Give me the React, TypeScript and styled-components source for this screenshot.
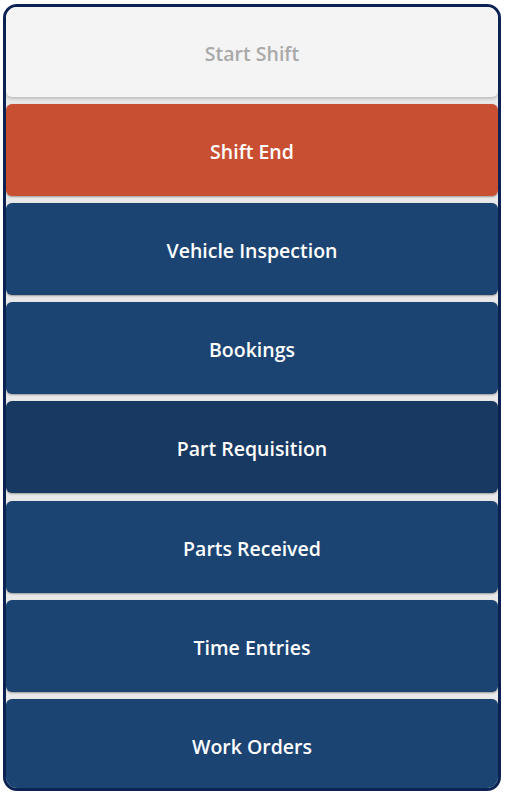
import React from "react";
import styled, { createGlobalStyle } from "styled-components";

const Global = createGlobalStyle`
  html, body { margin: 0; padding: 0; background: #ffffff; }
  body { font-family: "Open Sans", "Noto Sans", sans-serif; }
`;

const Page = styled.div`
  padding: 4px 4px 2px 3px;
`;

const Frame = styled.div`
  border: 3.5px solid #0b2253;
  border-radius: 14px;
  overflow: hidden;
  background: #e9e9e9;
  height: 787px;
  box-sizing: border-box;
  display: flex;
  flex-direction: column;
`;

const StartPanel = styled.div`
  height: 90px;
  flex: none;
  background: #f4f4f4;
  display: flex;
  align-items: center;
  justify-content: center;
  color: #a9a9a9;
  font-size: 19.5px;
  font-weight: 600;
  padding-top: 2px;
  box-sizing: border-box;
  box-shadow: 0 2px 3px rgba(0, 0, 0, 0.18);
  border-radius: 0 0 6px 6px;
`;

const List = styled.div`
  display: flex;
  flex-direction: column;
  gap: 7.3px;
  padding-top: 6.5px;
`;

const Tile = styled.div<{ $bg: string }>`
  height: 92px;
  flex: none;
  box-sizing: border-box;
  padding-top: 3px;
  background: ${(p) => p.$bg};
  border-radius: 6px;
  display: flex;
  align-items: center;
  justify-content: center;
  color: #ffffff;
  font-size: 19.5px;
  font-weight: 600;
  box-shadow: 0 1px 2px rgba(0, 0, 0, 0.35);
`;

const items: { label: string; bg: string }[] = [
  { label: "Shift End", bg: "#c94f32" },
  { label: "Vehicle Inspection", bg: "#1c4473" },
  { label: "Bookings", bg: "#1c4473" },
  { label: "Part Requisition", bg: "#183961" },
  { label: "Parts Received", bg: "#1c4473" },
  { label: "Time Entries", bg: "#1c4473" },
  { label: "Work Orders", bg: "#1c4473" },
];

export default function App() {
  return (
    <Page>
      <Global />
      <Frame>
        <StartPanel>Start Shift</StartPanel>
        <List>
          {items.map((it) => (
            <Tile key={it.label} $bg={it.bg}>
              {it.label}
            </Tile>
          ))}
        </List>
      </Frame>
    </Page>
  );
}
